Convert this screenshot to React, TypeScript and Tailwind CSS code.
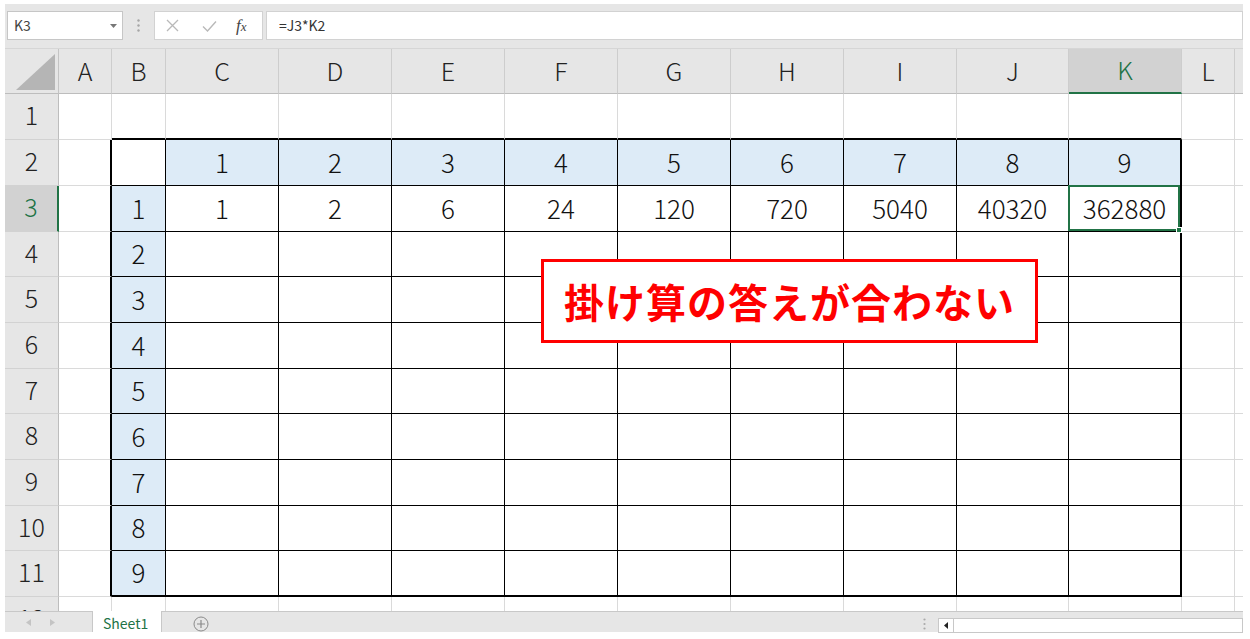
const COLS = ['A', 'B', 'C', 'D', 'E', 'F', 'G', 'H', 'I', 'J', 'K', 'L'];

const COL_W = [
  'w-[53px]', 'w-[54px]', 'w-[113px]', 'w-[113px]', 'w-[113px]', 'w-[113px]',
  'w-[113px]', 'w-[113px]', 'w-[113px]', 'w-[112px]', 'w-[113px]', 'w-[53px]',
];

// row 1..12
const ROW_H = [
  'h-[46px]', 'h-[46px]', 'h-[46px]', 'h-[45px]', 'h-[46px]', 'h-[46px]',
  'h-[45px]', 'h-[46px]', 'h-[46px]', 'h-[45px]', 'h-[46px]', 'h-[46px]',
];

const ROW3 = ['1', '1', '2', '6', '24', '120', '720', '5040', '40320', '362880'];

function cellText(r: number, c: number) {
  if (r === 2 && c >= 2 && c <= 10) return String(c - 1);
  if (r === 3 && c >= 1 && c <= 10) return ROW3[c - 1];
  if (c === 1 && r >= 4 && r <= 11) return String(r - 2);
  return '';
}

function rightBorder(r: number, c: number) {
  const inRows = r >= 2 && r <= 11;
  if (inRows && (c === 0 || c === 10)) return 'border-r-2 border-r-black';
  if (inRows && c >= 1 && c <= 9) return 'border-r border-r-black';
  return 'border-r border-r-[#dadada]';
}

function bottomBorder(r: number, c: number) {
  const inCols = c >= 1 && c <= 10;
  if (inCols && (r === 1 || r === 11)) return 'border-b-2 border-b-black';
  if (inCols && r >= 2 && r <= 10) return 'border-b border-b-black';
  return 'border-b border-b-[#dadada]';
}

function isBlue(r: number, c: number) {
  return (r === 2 && c >= 2 && c <= 10) || (c === 1 && r >= 3 && r <= 11);
}

function FormulaBar() {
  return (
    <div className="h-[45px] shrink-0 bg-[#e6e6e6] flex items-start pt-[7px] pl-[2px] border-b border-b-[#d6d6d6]">
      <div className="w-[116px] h-[29px] bg-white border border-[#c6c6c6] flex items-center justify-between pl-[6px] pr-[5px]">
        <span className="text-[14px] text-[#444]">K3</span>
        <svg width="7" height="4" viewBox="0 0 7 4">
          <path d="M0 0 L7 0 L3.5 4 Z" fill="#777" />
        </svg>
      </div>
      <div className="w-[31px] h-[29px] flex items-center justify-center">
        <svg width="3" height="13" viewBox="0 0 3 13">
          <circle cx="1.5" cy="1.5" r="1.2" fill="#a6a6a6" />
          <circle cx="1.5" cy="6.5" r="1.2" fill="#a6a6a6" />
          <circle cx="1.5" cy="11.5" r="1.2" fill="#a6a6a6" />
        </svg>
      </div>
      <div className="w-[109px] h-[29px] bg-white border border-[#d2d2d2] flex items-center pl-[11px]">
        <svg width="13" height="13" viewBox="0 0 13 13">
          <path d="M1 1 L12 12 M12 1 L1 12" stroke="#b9b9b9" strokeWidth="1.3" />
        </svg>
        <svg width="15" height="12" viewBox="0 0 15 12" className="ml-[23px]">
          <path d="M1 6.5 L5.5 11 L14 1.5" stroke="#b9b9b9" strokeWidth="1.4" fill="none" />
        </svg>
        <span className="ml-[19px] text-[17px] italic text-[#444] font-[family-name:'Liberation_Serif',serif] leading-none">
          f<span className="text-[13px]">x</span>
        </span>
      </div>
      <div className="flex-1 h-[29px] ml-[3px] bg-white border border-[#d2d2d2] flex items-center pl-[12px]">
        <span className="text-[14px] text-[#333]">=J3*K2</span>
      </div>
    </div>
  );
}

function HeaderRow() {
  return (
    <div className="flex h-[45px] bg-[#e6e6e6]">
      <div className="w-[54px] shrink-0 h-full border-r border-r-[#c4c4c4] border-b border-b-[#bdbdbd] flex items-end justify-end pr-[3px] pb-[3px]">
        <svg width="39" height="36" viewBox="0 0 39 36">
          <path d="M39 0 L39 36 L0 36 Z" fill="#b5b5b5" />
        </svg>
      </div>
      {COLS.map((name, c) => {
        const sel = c === 10;
        return (
          <div
            key={name}
            className={`${COL_W[c]} shrink-0 h-full flex items-center justify-center pb-[1px] text-[25px] font-light border-r border-r-[#cdcdcd] ${
              sel
                ? 'bg-[#d2d2d2] text-[#217346] border-b-2 border-b-[#217346]'
                : 'text-[#222] border-b border-b-[#bdbdbd]'
            }`}
          >
            {name}
          </div>
        );
      })}
      <div className="flex-1 h-full border-b border-b-[#bdbdbd]" />
    </div>
  );
}

function SheetRow({ r }: { r: number }) {
  const sel = r === 3;
  return (
    <div className={`flex ${ROW_H[r - 1]} shrink-0`}>
      <div
        className={`w-[54px] shrink-0 h-full flex items-center justify-center pb-[3px] text-[25px] font-light border-b border-b-[#d2d2d2] ${
          sel
            ? 'bg-[#d2d2d2] text-[#217346] border-r-2 border-r-[#217346]'
            : 'bg-[#e6e6e6] text-[#222] border-r border-r-[#bdbdbd]'
        }`}
      >
        {r}
      </div>
      {COLS.map((name, c) => (
        <div
          key={name}
          className={`${COL_W[c]} shrink-0 h-full relative flex items-center justify-center pb-[3px] text-[26px] font-light text-[#111] ${rightBorder(r, c)} ${bottomBorder(r, c)} ${
            isBlue(r, c) ? 'bg-[#ddebf7]' : 'bg-white'
          }`}
        >
          {cellText(r, c)}
          {r === 3 && c === 10 && (
            <div className="absolute -left-px -top-px right-0 bottom-0 border-2 border-[#217346] z-10">
              <div className="absolute -right-[4px] -bottom-[4px] w-[6px] h-[6px] bg-[#217346] border border-white" />
            </div>
          )}
        </div>
      ))}
      <div className="flex-1 h-full border-b border-b-[#dadada]" />
    </div>
  );
}

function TabBar() {
  return (
    <div className="h-[21px] shrink-0 flex bg-[#e6e6e6] text-[#bdbdbd]">
      <div className="w-[88px] h-full border-t border-t-[#c8c8c8] border-r border-r-[#c8c8c8] flex items-center pl-[21px] gap-[19px]">
        <svg width="5" height="7" viewBox="0 0 5 7"><path d="M5 0 L5 7 L0 3.5 Z" fill="#c4c4c4" /></svg>
        <svg width="5" height="7" viewBox="0 0 5 7"><path d="M0 0 L0 7 L5 3.5 Z" fill="#c4c4c4" /></svg>
      </div>
      <div className="w-[69px] h-full bg-white border-r border-r-[#c8c8c8] flex items-center pl-[10px]">
        <span className="text-[14px] text-[#217346] leading-none pt-[2px]">Sheet1</span>
      </div>
      <div className="flex-1 h-full border-t border-t-[#c8c8c8] flex items-center">
        <svg width="16" height="16" viewBox="0 0 16 16" className="ml-[31px] mt-[3px]">
          <circle cx="8" cy="8" r="7" stroke="#8a8a8a" strokeWidth="1" fill="none" />
          <path d="M8 4 L8 12 M4 8 L12 8" stroke="#8a8a8a" strokeWidth="1.2" />
        </svg>
        <svg width="3" height="12" viewBox="0 0 3 12" className="ml-[714px] mt-[3px]">
          <circle cx="1.5" cy="1.5" r="1.1" fill="#a9a9a9" />
          <circle cx="1.5" cy="6" r="1.1" fill="#a9a9a9" />
          <circle cx="1.5" cy="10.5" r="1.1" fill="#a9a9a9" />
        </svg>
        <div className="ml-[12px] flex-1 h-[15px] mt-[6px] bg-white border border-[#c8c8c8] flex">
          <div className="w-[15px] h-full border-r border-r-[#c8c8c8] flex items-center justify-center">
            <svg width="4" height="7" viewBox="0 0 4 7"><path d="M4 0 L4 7 L0 3.5 Z" fill="#222" /></svg>
          </div>
        </div>
      </div>
    </div>
  );
}

export default function App() {
  const rows = [1, 2, 3, 4, 5, 6, 7, 8, 9, 10, 11, 12];
  return (
    <div className="w-[1250px] h-[639px] bg-white pt-[4px] pl-[5px] pr-[7px] pb-[7px] flex flex-col overflow-hidden font-[family-name:'Noto_Sans_CJK_JP',sans-serif]">
      <FormulaBar />
      <div className="flex-1 relative overflow-hidden bg-white">
        <HeaderRow />
        {rows.map((r) => (
          <SheetRow key={r} r={r} />
        ))}
        <div className="absolute left-[536px] top-[210px] w-[497px] h-[84px] border-[3px] border-[#f00] bg-white flex items-center justify-center z-20">
          <span className="text-[40px] font-bold text-[#f00] leading-none tracking-[1px]">
            掛け算の答えが合わない
          </span>
        </div>
      </div>
      <TabBar />
    </div>
  );
}
